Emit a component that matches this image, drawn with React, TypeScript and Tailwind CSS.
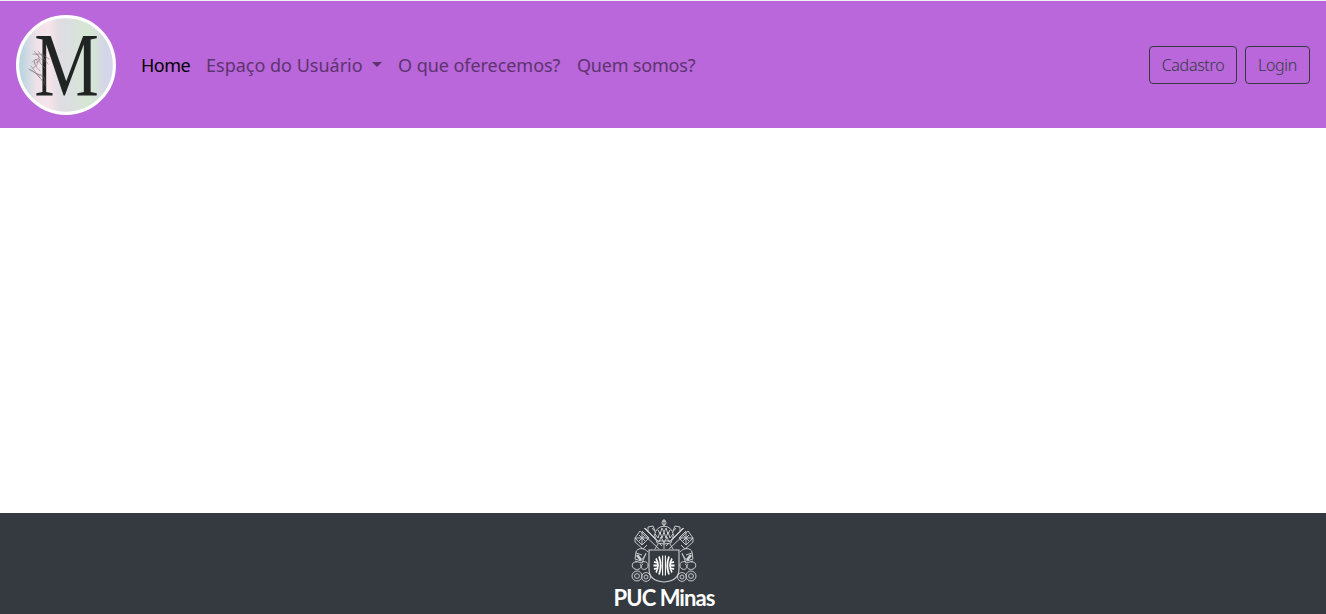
import React from 'react';

function BrandLogo() {
  return (
    <svg className="h-[100px] w-[100px] shrink-0" viewBox="0 0 100 100" role="img" aria-label="M">
      <defs>
        <linearGradient id="pastel" x1="0" x2="1" y1="0" y2="0">
          <stop offset="0" stopColor="#b5d5df" />
          <stop offset="0.05" stopColor="#bfd6e0" />
          <stop offset="0.2" stopColor="#f0e2e9" />
          <stop offset="0.32" stopColor="#f6e4ea" />
          <stop offset="0.44" stopColor="#dfdde3" />
          <stop offset="0.55" stopColor="#dcdfe0" />
          <stop offset="0.7" stopColor="#d5e7d3" />
          <stop offset="0.8" stopColor="#d5e3d8" />
          <stop offset="0.9" stopColor="#d4d5e7" />
          <stop offset="1" stopColor="#d6d5ef" />
        </linearGradient>
      </defs>
      <circle cx="50" cy="50" r="48.4" fill="url(#pastel)" stroke="#fff" strokeWidth="3.2" />
      <text
        transform="translate(18.3 81) scale(0.79 1)"
        fontFamily="Liberation Serif, serif"
        fontSize="92"
        fill="#202423"
      >
        M
      </text>
      <g fill="none" stroke="#77706f" strokeWidth="0.55" strokeLinecap="round">
        <path d="M13 54 Q21 57 30 71 M15 51 L24 63 M17 53 Q25 49 20 44 Q15 47 24 56 M16 47 Q25 40 24 48 L29 53" />
        <path d="M17 39 Q24 38 23 46 L18 49 M18 36 L28 47 M20 39 Q30 38 27 45 M22 36 L32 49 M26 39 L33 44 M14 55 L27 62 M22 59 Q29 59 29 67" />
      </g>
    </svg>
  );
}

function PucCrest() {
  const side = (
    <g>
      <path d="M28 31 L9 13 M31 28 L13 10 M9 13 L4 20 L11 27 L18 20 L11 13 M4 20 L4 24 L12 31 L16 27 M14 10 L18 14" />
      <path d="M5 20 H17 M11 14 V26 M8 17 L14 23 M14 17 L8 23" />
      <path d="M17 14 L17 9 L22 8 L24 13 M18 14 L25 21 M21 10 L27 17" />
      <path d="M17 34 C13 29 6 30 5 34 L4 41 L10 43 L15 36 M5 35 L11 37 M15 35 L11 45 L4 43" />
      <path d="M6 44 C0 43 0 50 4 51 C8 53 12 49 9 46 M11 44 C17 42 19 48 15 51 C11 53 8 48 12 46" />
      <circle cx="6" cy="58" r="5" />
      <circle cx="6" cy="58" r="2.4" />
      <circle cx="15" cy="59" r="4.4" />
      <circle cx="15" cy="59" r="2" />
      <path d="M6 37 L10 42" strokeWidth="2.8" />
    </g>
  );
  return (
    <svg className="ml-[2px] h-[66px] w-[66px]" viewBox="0 0 66 66" fill="none" stroke="#cdd0d2" strokeWidth="0.95">
      {side}
      <g transform="translate(66 0) scale(-1 1)">{side}</g>
      <path d="M26 25 L23.5 17 Q25 9 33 8 Q41 9 42.5 17 L40 25 Q33 27 26 25Z" fill="#343a40" />
      <circle cx="33" cy="4.8" r="2" />
      <path d="M33 1 V9 M31 3 H35" />
      <path d="M24 16 L27 20 L29 14 L31 20 L33 14 L35 20 L37 14 L39 20 L42 16 M25 21 L28 24 L30 19 L33 25 L36 19 L38 24 L41 21 M27 12 L29 16 L31 10 L33 14 L35 10 L37 16 L39 12 M26 23 H40" />
      <path d="M27 26 L24 31 M39 26 L42 31 M33 25 V31" />
      <path d="M18 32 H48 V51 Q48 63 33 64 Q18 63 18 51Z" fill="#343a40" strokeWidth="1.1" />
      <g fill="none" stroke="#fff">
        <path d="M31.6 37.5 V57.5 M34.4 37.5 V57.5" strokeWidth="1.1" />
        <path d="M28 38.5 Q31.4 47.5 28 56.5 M38 38.5 Q34.6 47.5 38 56.5" strokeWidth="1.8" />
        <path d="M25 40.5 Q29 47.5 25 54.5 M41 40.5 Q37 47.5 41 54.5" strokeWidth="1.6" />
        <path d="M23 43.8 L27 45 M22.5 47.5 H27.5 M23 51.2 L27 50 M43 43.8 L39 45 M43.5 47.5 H38.5 M43 51.2 L39 50" strokeWidth="1.8" />
      </g>
    </svg>
  );
}

const navLink = 'block whitespace-nowrap leading-[30px]';
const outlineButton =
  'h-[38px] whitespace-nowrap rounded-[4px] border border-[#343a40] text-center text-base font-light leading-[37px] tracking-[-0.3px] text-[#343a40]';

export default function App() {
  return (
    <div className="flex h-[614px] flex-col overflow-hidden bg-white font-['Noto_Sans',sans-serif]">
      <header className="flex h-32 shrink-0 items-center border-t border-[#f2f2f4] bg-[#b967db] px-4">
        <BrandLogo />
        <nav className="ml-[25px] flex grow text-[18px] text-[#5d346e]">
          <a href="#" className={`${navLink} w-[65px] tracking-[-0.5px] text-black`}>Home</a>
          <a href="#" className={`${navLink} flex w-[192px] items-center`}>
            <span className="w-[166px]">Espaço do Usuário</span>
            <span className="mt-[-1px] h-0 w-0 border-x-[5px] border-t-[5px] border-x-transparent border-t-[#5d346e]" />
          </a>
          <a href="#" className={`${navLink} w-[179px] tracking-[-0.05px]`}>O que oferecemos?</a>
          <a href="#" className={`${navLink} tracking-[-0.2px]`}>Quem somos?</a>
        </nav>
        <div className="flex gap-2">
          <button className={`${outlineButton} w-[88px]`}>Cadastro</button>
          <button className={`${outlineButton} w-[65px]`}>Login</button>
        </div>
      </header>
      <main className="grow" />
      <footer className="flex h-[101px] shrink-0 flex-col items-center bg-[#343a40] pt-[5px]">
        <PucCrest />
        <span className="ml-[2px] mt-[1px] whitespace-nowrap font-[Lato,sans-serif] text-[22px] font-bold leading-[26px] tracking-[-0.95px] text-white">
          PUC Minas
        </span>
      </footer>
    </div>
  );
}
